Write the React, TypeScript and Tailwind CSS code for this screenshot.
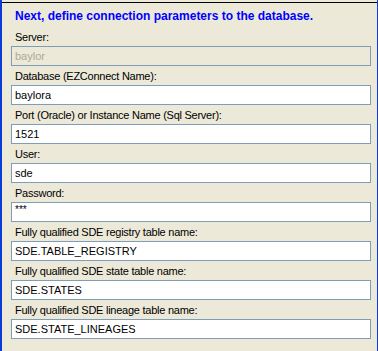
import React from 'react';

const fields = [
  { label: 'Server:', value: 'baylor', disabled: true },
  { label: 'Database (EZConnect Name):', value: 'baylora' },
  { label: 'Port (Oracle) or Instance Name (Sql Server):', value: '1521' },
  { label: 'User:', value: 'sde' },
  { label: 'Password:', value: '***', password: true },
  { label: 'Fully qualified SDE registry table name:', value: 'SDE.TABLE_REGISTRY' },
  { label: 'Fully qualified SDE state table name:', value: 'SDE.STATES' },
  { label: 'Fully qualified SDE lineage table name:', value: 'SDE.STATE_LINEAGES' },
];

const App: React.FC = () => {
  return (
    <div
      className="w-[378px] h-[351px] bg-[#ECE9D8] border-l-2 border-r border-[#0B3CD5] overflow-hidden"
      style={{ fontFamily: '"Liberation Sans", Arial, sans-serif' }}
    >
      <div className="mt-[2px] border-t border-black">
        <h1 className="mt-[7px] ml-[13px] text-[12px] leading-[13px] font-bold text-[#0000FF]">
          Next, define connection parameters to the database.
        </h1>

        <div className="mt-[8px] ml-[9px] w-[360px] flex flex-col">
          {fields.map((f) => (
            <div key={f.label} className="flex flex-col mb-[4px]">
              <label className="ml-[4px] text-[11px] leading-[13px] tracking-[-0.25px] text-black mb-[2px]">
                {f.label}
              </label>
              <div
                className={
                  'h-[20px] border border-[#7F9DB9] pl-[3px] flex items-center text-[11px] ' +
                  (f.disabled ? 'bg-[#ECE9D8] text-[#ACA899]' : 'bg-white text-black')
                }
              >
                {f.password ? (
                  <span className="self-start text-[10px] leading-[12px] pt-[1px]">{f.value}</span>
                ) : (
                  <span>{f.value}</span>
                )}
              </div>
            </div>
          ))}
        </div>
      </div>
    </div>
  );
};

export default App;
